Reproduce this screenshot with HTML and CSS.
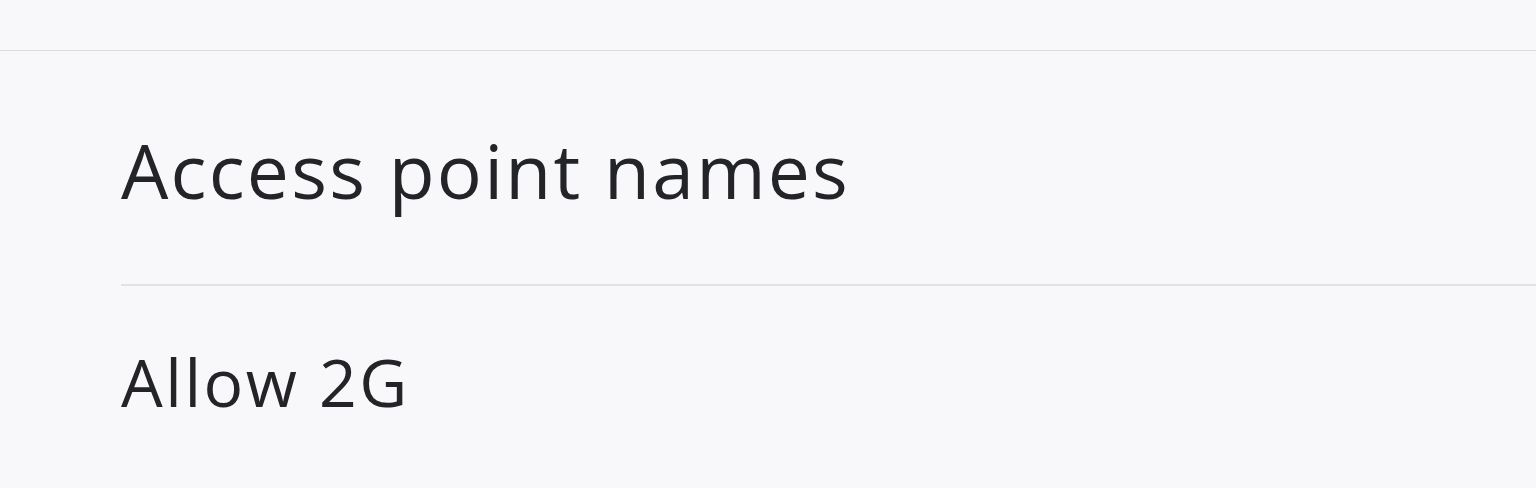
FILE: index.html
```html
<!DOCTYPE html>
<html>
<head>
  <title>Mobile network</title>
  <link rel="stylesheet" href="styles.css">
</head>
<body>
  <div class="topbar"></div>
  <ul class="prefs">
    <li class="pref pref-apn">Access point names</li>
    <li class="pref pref-2g">Allow 2G</li>
  </ul>
</body>
</html>
```
FILE: styles.css
```css
body {
  margin: 0;
  background: #f8f7fa;
  font-family: "Open Sans", "Noto Sans", sans-serif;
  color: #232428;
}
.topbar {
  height: 50px;
  border-bottom: 1px solid #dddbe0;
}
.prefs {
  list-style: none;
  margin: 0;
  padding: 0 0 0 121px;
}
.pref {
  display: flex;
  align-items: center;
  box-sizing: border-box;
}
.pref-apn {
  height: 235px;
  padding-top: 5px;
  font-size: 75px;
  letter-spacing: 2.2px;
  border-bottom: 2px solid #e3e1e6;
}
.pref-2g {
  height: 200px;
  padding-bottom: 10px;
  font-size: 66px;
  letter-spacing: 2.5px;
}
```
